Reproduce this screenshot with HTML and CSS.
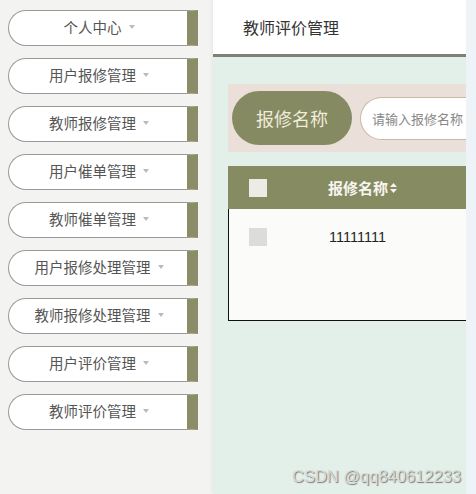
FILE: index.html
```html
<!DOCTYPE html>
<html lang="zh">
<head>
<meta charset="utf-8">
<link rel="stylesheet" href="styles.css">
</head>
<body>
<div class="app">
  <aside class="sidebar">
    <div class="menu-item"><span>个人中心</span><i class="caret"></i></div>
    <div class="menu-item"><span>用户报修管理</span><i class="caret"></i></div>
    <div class="menu-item"><span>教师报修管理</span><i class="caret"></i></div>
    <div class="menu-item"><span>用户催单管理</span><i class="caret"></i></div>
    <div class="menu-item"><span>教师催单管理</span><i class="caret"></i></div>
    <div class="menu-item"><span>用户报修处理管理</span><i class="caret"></i></div>
    <div class="menu-item"><span>教师报修处理管理</span><i class="caret"></i></div>
    <div class="menu-item"><span>用户评价管理</span><i class="caret"></i></div>
    <div class="menu-item"><span>教师评价管理</span><i class="caret"></i></div>
  </aside>
  <main class="main">
    <header class="topbar">教师评价管理</header>
    <section class="content">
      <div class="search">
        <div class="search-btn">报修名称</div>
        <div class="search-input">请输入报修名称</div>
      </div>
      <div class="table">
        <div class="thead">
          <div class="cell-check"><span class="box"></span></div>
          <div class="cell-name">报修名称<svg class="sort" width="7" height="10" viewBox="0 0 7 10"><path d="M3.5 0 L7 4 L0 4 Z M0 6 L7 6 L3.5 10 Z" fill="#f4f4ee"/></svg></div>
        </div>
        <div class="tbody">
          <div class="row">
            <div class="cell-check"><span class="box grey"></span></div>
            <div class="cell-name">11111111</div>
          </div>
        </div>
      </div>
    </section>
  </main>
  <div class="edge"></div>
</div>
<div class="watermark">CSDN @qq840612233</div>
</body>
</html>
```
FILE: styles.css
```css
* { box-sizing: border-box; }
html, body { margin: 0; padding: 0; }
body {
  width: 476px;
  height: 494px;
  overflow: hidden;
  font-family: "Noto Sans CJK SC", "Liberation Sans", sans-serif;
  background: #f3f3f1;
  position: relative;
}
.app {
  display: flex;
  height: 494px;
}
.sidebar {
  width: 213px;
  flex: none;
  background: #f3f3f1;
  padding: 10px 15px 0 8px;
  display: flex;
  flex-direction: column;
  gap: 12px;
}
.menu-item {
  height: 36px;
  width: 190px;
  background: #fff;
  border: 1px solid #9a9a96;
  border-right: 11px solid #8a8d68;
  border-radius: 18px 0 0 18px;
  display: flex;
  align-items: center;
  justify-content: center;
  gap: 7px;
  font-size: 14.5px;
  color: #555;
  padding: 0 0 3px 2px;
}
.caret {
  width: 0;
  height: 0;
  border-left: 3.5px solid transparent;
  border-right: 3.5px solid transparent;
  border-top: 4px solid #bbb;
  margin-top: 1px;
}
.main {
  width: 253px;
  flex: none;
  display: flex;
  flex-direction: column;
  background: #e3f0ea;
  box-shadow: -2px 0 3px rgba(0,0,0,0.04);
}
.topbar {
  height: 57px;
  background: #fff;
  border-bottom: 3px solid #7c8373;
  font-size: 16px;
  color: #333;
  padding: 15px 0 0 30px;
}
.content {
  flex: 1;
  padding: 27px 0 0 15px;
}
.search {
  height: 68px;
  background: #ebdfd9;
  display: flex;
  align-items: center;
  padding-left: 4px;
  gap: 8px;
  overflow: hidden;
}
.search-btn {
  flex: none;
  width: 120px;
  height: 54px;
  border-radius: 27px;
  background: #858a62;
  color: #f1ecdc;
  font-size: 18px;
  display: flex;
  align-items: center;
  justify-content: center;
}
.search-input {
  flex: none;
  width: 150px;
  height: 43px;
  border-radius: 22px 0 0 22px;
  background: #fff;
  border: 1px solid #c9b9a5;
  border-right: none;
  font-size: 13px;
  color: #888;
  display: flex;
  align-items: center;
  padding-left: 11px;
  white-space: nowrap;
  overflow: hidden;
}
.table {
  margin-top: 14px;
}
.thead {
  height: 43px;
  background: #878b62;
  display: flex;
  align-items: center;
  color: #f6f6f0;
  font-weight: bold;
  font-size: 15px;
}
.cell-check {
  width: 100px;
  flex: none;
  padding-left: 21px;
  display: flex;
  align-items: center;
}
.box {
  width: 18px;
  height: 18px;
  background: #ecece6;
  display: block;
}
.box.grey { background: #dcdcdc; }
.cell-name {
  display: flex;
  align-items: center;
  gap: 1px;
}
.sort { margin-left: 1px; }
.tbody {
  height: 112px;
  background: #fbfbf9;
  border-left: 1px solid #111;
  border-bottom: 1px solid #111;
}
.row {
  height: 56px;
  display: flex;
  align-items: center;
  font-size: 14.5px;
  color: #222;
  font-family: "Liberation Sans", sans-serif;
}
.row .cell-check { padding-left: 20px; }
.edge {
  flex: 1;
  background: #eef3f8;
}
.watermark {
  position: absolute;
  right: 15px;
  bottom: 8px;
  font-family: "Liberation Sans", sans-serif;
  font-size: 16.5px;
  color: #d8dbd8;
  text-shadow: 1px 1px 1px #777;
}
```
